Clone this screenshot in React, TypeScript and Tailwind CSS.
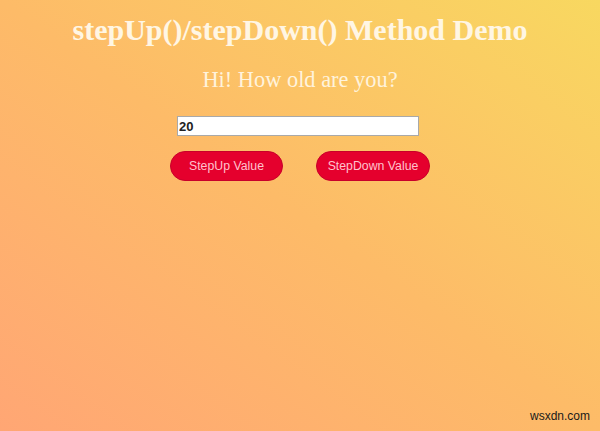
export default function App() {
  return (
    <div className="relative flex h-[431px] w-[600px] flex-col items-center overflow-hidden bg-linear-to-tr from-[#ffa674] via-[#fdbb68] to-[#f8d860] font-['Liberation_Serif',serif]">
      {/* heading */}
      <h1 className="mt-[13px] text-[30px] leading-[34px] font-bold text-[#fff6e4]">
        stepUp()/stepDown() Method Demo
      </h1>
      <p className="mt-[20px] text-[22.4px] leading-[26px] text-[#fff3dc]">Hi! How old are you?</p>

      {/* number input */}
      <input
        type="text"
        defaultValue="20"
        className="mt-[23px] mr-[4px] h-[20px] w-[242px] border border-[#a9a9a9] bg-white px-[1px] font-['Liberation_Sans',sans-serif] text-[13px] font-semibold text-[#222] outline-none"
      />

      <div className="mt-[15px] flex gap-[33px] font-['Liberation_Sans',sans-serif]">
        <button className="h-[30px] w-[113px] rounded-full border border-[#c8002a] bg-[#e5002d] text-[12.3px] text-[#ffc2cc]">
          StepUp Value
        </button>
        <button className="h-[30px] w-[114px] rounded-full border border-[#c8002a] bg-[#e5002d] text-[12.3px] text-[#ffc2cc]">
          StepDown Value
        </button>
      </div>

      {/* watermark */}
      <span className="absolute right-[10px] bottom-[6px] font-['Liberation_Sans',sans-serif] text-[12px] text-[#1a1a1a]">
        wsxdn.com
      </span>
    </div>
  )
}
